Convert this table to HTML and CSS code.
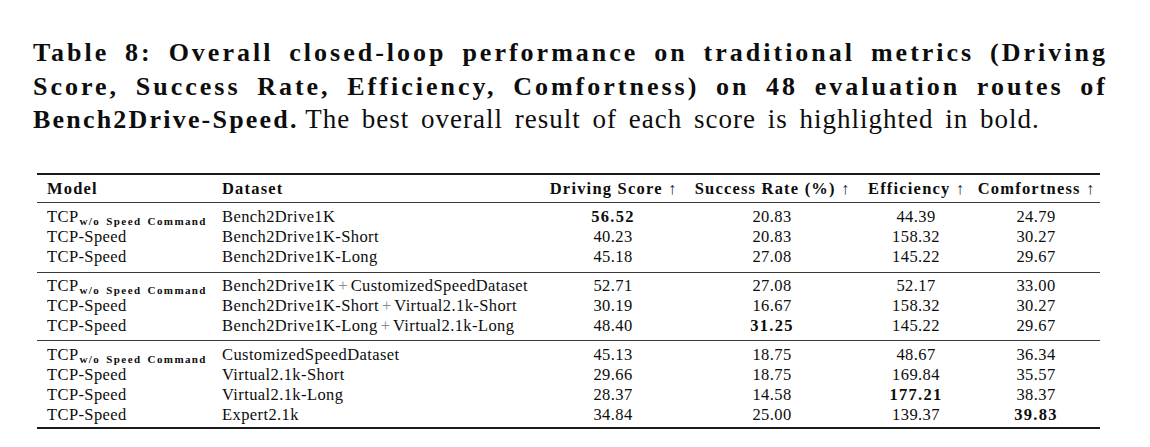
FILE: index.html
```html
<!DOCTYPE html>
<html lang="en">
<head>
<meta charset="utf-8">
<title>Table 8</title>
<link rel="stylesheet" href="styles.css">
</head>
<body>
<div class="page">
  <div class="caption">
    <div class="cap-line just"><b>Table 8: Overall closed-loop performance on traditional metrics (Driving</b></div>
    <div class="cap-line just"><b>Score, Success Rate, Efficiency, Comfortness) on 48 evaluation routes of</b></div>
    <div class="cap-line"><b>Bench2Drive-Speed.</b> <span class="reg">The best overall result of each score is highlighted in bold.</span></div>
  </div>

  <table class="results">
    <colgroup>
      <col class="c-model">
      <col class="c-data">
      <col class="c-ds">
      <col class="c-sr">
      <col class="c-eff">
      <col class="c-com">
    </colgroup>
    <thead>
      <tr>
        <th class="model">Model</th>
        <th class="data">Dataset</th>
        <th>Driving Score <span class="arr">↑</span></th>
        <th>Success Rate (%) <span class="arr">↑</span></th>
        <th>Efficiency <span class="arr">↑</span></th>
        <th>Comfortness <span class="arr">↑</span></th>
      </tr>
    </thead>
    <tbody class="g1">
      <tr class="first">
        <td class="model">TCP<sub class="sub">w/o Speed Command</sub></td>
        <td class="data">Bench2Drive1K</td>
        <td><b>56.52</b></td><td>20.83</td><td>44.39</td><td>24.79</td>
      </tr>
      <tr>
        <td class="model">TCP-Speed</td>
        <td class="data">Bench2Drive1K-Short</td>
        <td>40.23</td><td>20.83</td><td>158.32</td><td>30.27</td>
      </tr>
      <tr class="last">
        <td class="model">TCP-Speed</td>
        <td class="data">Bench2Drive1K-Long</td>
        <td>45.18</td><td>27.08</td><td>145.22</td><td>29.67</td>
      </tr>
    </tbody>
    <tbody class="g2">
      <tr class="first">
        <td class="model">TCP<sub class="sub">w/o Speed Command</sub></td>
        <td class="data">Bench2Drive1K<span class="plus">+</span>CustomizedSpeedDataset</td>
        <td>52.71</td><td>27.08</td><td>52.17</td><td>33.00</td>
      </tr>
      <tr>
        <td class="model">TCP-Speed</td>
        <td class="data">Bench2Drive1K-Short<span class="plus">+</span>Virtual2.1k-Short</td>
        <td>30.19</td><td>16.67</td><td>158.32</td><td>30.27</td>
      </tr>
      <tr class="last">
        <td class="model">TCP-Speed</td>
        <td class="data">Bench2Drive1K-Long<span class="plus">+</span>Virtual2.1k-Long</td>
        <td>48.40</td><td><b>31.25</b></td><td>145.22</td><td>29.67</td>
      </tr>
    </tbody>
    <tbody class="g3">
      <tr class="first">
        <td class="model">TCP<sub class="sub">w/o Speed Command</sub></td>
        <td class="data">CustomizedSpeedDataset</td>
        <td>45.13</td><td>18.75</td><td>48.67</td><td>36.34</td>
      </tr>
      <tr>
        <td class="model">TCP-Speed</td>
        <td class="data">Virtual2.1k-Short</td>
        <td>29.66</td><td>18.75</td><td>169.84</td><td>35.57</td>
      </tr>
      <tr>
        <td class="model">TCP-Speed</td>
        <td class="data">Virtual2.1k-Long</td>
        <td>28.37</td><td>14.58</td><td><b>177.21</b></td><td>38.37</td>
      </tr>
      <tr class="last">
        <td class="model">TCP-Speed</td>
        <td class="data">Expert2.1k</td>
        <td>34.84</td><td>25.00</td><td>139.37</td><td><b>39.83</b></td>
      </tr>
    </tbody>
  </table>
</div>
</body>
</html>
```

FILE: styles.css
```css
html, body {
  margin: 0;
  padding: 0;
  background: #ffffff;
}

body {
  font-family: "Liberation Serif", "Times New Roman", serif;
  color: #0d0d0d;
}

.page {
  width: 1150px;
  height: 447px;
  overflow: hidden;
}

.caption {
  margin: 36px 0 0 33px;
  width: 1075px;
  font-size: 26px;
  line-height: 33.5px;
}

.cap-line {
  white-space: nowrap;
}

.cap-line b {
  font-weight: 700;
  letter-spacing: 2.2px;
}

.cap-line.just {
  text-align: justify;
  text-align-last: justify;
  white-space: normal;
}

.cap-line.just b {
  letter-spacing: 3px;
}

.cap-line .reg {
  font-size: 27px;
  letter-spacing: 1px;
  word-spacing: 4px;
}

.results {
  margin: 36px 0 0 37px;
  width: 1063px;
  table-layout: fixed;
  border-collapse: collapse;
  font-size: 16.5px;
  line-height: 20px;
}

.c-model { width: 179px; }
.c-data  { width: 326px; }
.c-ds    { width: 142px; }
.c-sr    { width: 176px; }
.c-eff   { width: 112px; }
.c-com   { width: 128px; }

.results th,
.results td {
  padding: 0;
  text-align: center;
  white-space: nowrap;
  letter-spacing: 0.4px;
}

.results th {
  font-weight: 700;
  letter-spacing: 1.2px;
  padding-top: 4px;
  padding-bottom: 3px;
  border-top: 2px solid #1a1a1a;
  border-bottom: 1px solid #3a3a3a;
}

.results th .arr {
  font-weight: 400;
  letter-spacing: 0;
  color: #1c2440;
}

.results b {
  letter-spacing: 1.3px;
}

.results .model {
  text-align: left;
  padding-left: 10px;
}

.results .data {
  text-align: left;
  padding-left: 6px;
}

.sub {
  font-size: 11px;
  font-weight: 700;
  letter-spacing: 1.4px;
  word-spacing: 2px;
  vertical-align: -3px;
  line-height: 0;
  padding-left: 1px;
}

.plus {
  color: #8a8a8a;
  letter-spacing: 0;
  padding: 0 3px;
}

.g1 .first td { padding-top: 4px; }
.g1 .last td  { padding-bottom: 5px; border-bottom: 1px solid #3a3a3a; }

.g2 .first td { padding-top: 3px; }
.g2 .last td  { padding-bottom: 4px; border-bottom: 1px solid #3a3a3a; }

.g3 .first td { padding-top: 4px; }
.g3 .last td  { padding-bottom: 2px; border-bottom: 2px solid #1a1a1a; }
```
